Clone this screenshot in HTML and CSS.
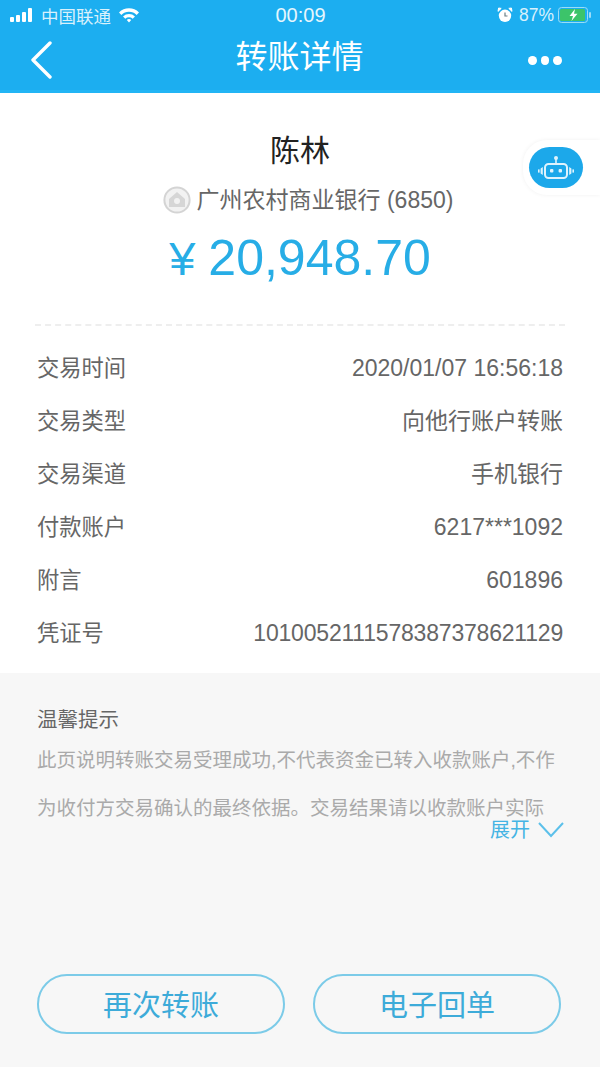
FILE: index.html
```html
<!DOCTYPE html>
<html lang="zh-CN">
<head>
  <meta charset="UTF-8">
  <title>转账详情</title>
  <meta name="viewport" content="width=device-width, initial-scale=1.0">
  <link rel="stylesheet" href="styles.css">
</head>
<body>
  <div class="page">

    <header class="top">
      <!-- Status bar -->
      <div class="status">
        <div class="status-left">
          <svg class="signal" width="24" height="14" viewBox="0 0 24 14">
            <rect x="0" y="9" width="4" height="5" rx="1"/>
            <rect x="6" y="7" width="4" height="7" rx="1"/>
            <rect x="12" y="4" width="4" height="10" rx="1"/>
            <rect x="18" y="0" width="4" height="14" rx="1"/>
          </svg>
          <span class="carrier">中国联通</span>
          <svg class="wifi" width="22" height="16" viewBox="0 0 22 16">
            <path d="M1 5.5 A14 14 0 0 1 21 5.5 L18.6 8 A10.6 10.6 0 0 0 3.4 8 Z"/>
            <path d="M5 9.4 A8.6 8.6 0 0 1 17 9.4 L14.7 11.7 A5.4 5.4 0 0 0 7.3 11.7 Z"/>
            <path d="M8.8 13 A3.2 3.2 0 0 1 13.2 13 L11 15.4 Z"/>
          </svg>
        </div>
        <span class="clock">00:09</span>
        <div class="status-right">
          <svg class="alarm" width="16" height="16" viewBox="0 0 16 16">
            <circle cx="8" cy="8.8" r="6.2" fill="#fff"/>
            <path d="M8 5.5 V9 H10.5" fill="none" stroke="#6b7f86" stroke-width="1.2"/>
            <path d="M1 4.4 L4.2 1.4 L1.6 1 Z M15 4.4 L11.8 1.4 L14.4 1 Z" fill="#fff" stroke="#fff"/>
          </svg>
          <span class="percent">87%</span>
          <svg class="battery" width="33" height="16" viewBox="0 0 33 16">
            <rect x="0.5" y="0.5" width="29" height="15" rx="3" fill="none" stroke="#9bdcf7"/>
            <rect x="2" y="2" width="25" height="12" rx="1.5" fill="#3cc46a"/>
            <rect x="31" y="5" width="2" height="6" rx="1" fill="#9bdcf7"/>
            <path d="M17 2 L11.5 9 H15 L13.5 14 L19.5 6.8 H16 Z" fill="#fff"/>
          </svg>
        </div>
      </div>

      <!-- Title bar -->
      <nav class="nav">
        <svg class="back" width="22" height="38" viewBox="0 0 22 38">
          <path d="M20 2 L3 19 L20 36" fill="none" stroke="#fff" stroke-width="3.4" stroke-linecap="round" stroke-linejoin="round"/>
        </svg>
        <h1 class="nav-title">转账详情</h1>
        <div class="more"><i></i><i></i><i></i></div>
      </nav>
    </header>

    <!-- Floating assistant -->
    <div class="robot-tab">
      <div class="robot">
        <svg width="36" height="26" viewBox="0 0 36 26">
          <circle cx="18" cy="3" r="2" fill="#dff3fd"/>
          <path d="M18 4 V9" stroke="#dff3fd" stroke-width="1.6"/>
          <rect x="7" y="9" width="22" height="14" rx="3.5" fill="none" stroke="#dff3fd" stroke-width="2"/>
          <rect x="12" y="14" width="3.4" height="3.4" rx="1" fill="#dff3fd"/>
          <rect x="20.6" y="14" width="3.4" height="3.4" rx="1" fill="#dff3fd"/>
          <path d="M4.8 12 V20 L2.6 18.4 V13.6 Z M31.2 12 V20 L33.4 18.4 V13.6 Z" fill="#dff3fd"/>
          <rect x="0" y="14.4" width="1.6" height="3.2" fill="#dff3fd"/>
          <rect x="34.4" y="14.4" width="1.6" height="3.2" fill="#dff3fd"/>
        </svg>
      </div>
    </div>

    <main class="detail">
      <section class="summary">
        <div class="payee">陈林</div>
        <div class="bank">
          <svg class="bank-icon" width="28" height="28" viewBox="0 0 28 28">
            <circle cx="14" cy="14" r="12.6" fill="#f2f2f2" stroke="#d4d4d4" stroke-width="2"/>
            <path d="M14 6 L22 13 V21 H6 V13 Z" fill="#d6d6d6"/>
            <circle cx="14" cy="15" r="3" fill="#f2f2f2"/>
          </svg>
          <span>广州农村商业银行 (6850)</span>
        </div>
        <div class="amount"><span class="yen">¥</span>20,948.70</div>
      </section>

      <dl class="rows">
        <div class="row"><dt>交易时间</dt><dd>2020/01/07 16:56:18</dd></div>
        <div class="row"><dt>交易类型</dt><dd>向他行账户转账</dd></div>
        <div class="row"><dt>交易渠道</dt><dd>手机银行</dd></div>
        <div class="row"><dt>付款账户</dt><dd>6217***1092</dd></div>
        <div class="row"><dt>附言</dt><dd>601896</dd></div>
        <div class="row"><dt>凭证号</dt><dd class="serial">1010052111578387378621129</dd></div>
      </dl>
    </main>

    <section class="tips">
      <h2 class="tips-title">温馨提示</h2>
      <p class="tips-text">此页说明转账交易受理成功,不代表资金已转入收款账户,不作</p>
      <p class="tips-text">为收付方交易确认的最终依据。交易结果请以收款账户实际</p>
      <div class="expand">
        <span>展开</span>
        <svg width="26" height="16" viewBox="0 0 26 16">
          <path d="M1 1 L13 14 L25 1" fill="none" stroke="#5cc0ea" stroke-width="2"/>
        </svg>
      </div>

      <div class="actions">
        <button class="action">再次转账</button>
        <button class="action">电子回单</button>
      </div>
    </section>

  </div>
</body>
</html>
```

FILE: styles.css
```css
* {
  box-sizing: border-box;
}

body {
  margin: 0;
  background: #fff;
  color: #555;
  font-family: "Liberation Sans", "Noto Sans CJK SC", sans-serif;
}

.page {
  position: relative;
  display: flex;
  flex-direction: column;
  height: 1067px;
  overflow: hidden;
}

/* Header */
.top {
  height: 93px;
  background: #1caef0;
  border-bottom: 3px solid #22b5f5;
  color: #fff;
}

.status {
  display: flex;
  align-items: center;
  justify-content: space-between;
  height: 30px;
  padding: 0 9px 0 10px;
}

.status-left,
.status-right {
  display: flex;
  align-items: center;
  width: 150px;
}

.status-right {
  justify-content: flex-end;
}

.signal {
  fill: #fff;
  margin-right: 7px;
}

.carrier {
  font-size: 17.5px;
  color: #d9f1fc;
}

.wifi {
  fill: #fff;
  margin-left: 7px;
}

.clock {
  font-size: 20px;
  color: #e6f6fd;
}

.percent {
  font-size: 17.5px;
  margin: 0 4px 0 6px;
  color: #d9f1fc;
}

.nav {
  display: flex;
  align-items: center;
  justify-content: space-between;
  height: 60px;
  padding: 0 38px 0 30px;
}

.back {
  display: block;
}

.nav-title {
  margin: 0 0 0 19px;
  padding-bottom: 6px;
  font-size: 32px;
  line-height: 40px;
  font-weight: 400;
}

.more {
  display: flex;
  gap: 4px;
  width: 34px;
}

.more i {
  width: 9px;
  height: 9px;
  border-radius: 50%;
  background: #fff;
}

/* Floating assistant tab */
.robot-tab {
  position: absolute;
  top: 140px;
  right: 0;
  width: 77px;
  height: 55px;
  padding: 7px 0 0 6px;
  background: #fff;
  border-radius: 24px 0 0 24px;
  box-shadow: 0 0 4px rgba(0,0,0,0.06);
}

.robot {
  display: flex;
  align-items: center;
  justify-content: center;
  width: 54px;
  height: 41px;
  border-radius: 21px;
  background: #1ca8ea;
}

/* Transfer summary */
.summary {
  display: flex;
  flex-direction: column;
  align-items: center;
  height: 233px;
  margin: 0 35px;
  padding-top: 36px;
  border-bottom: 2px dashed #eeeeee;
}

.payee {
  font-size: 30px;
  line-height: 44px;
  color: #222;
}

.bank {
  display: flex;
  align-items: center;
  gap: 6px;
  margin: 12px 0 0 16px;
  font-size: 23px;
  line-height: 30px;
  color: #666;
}

.amount {
  margin-top: 13px;
  font-size: 50px;
  line-height: 60px;
  color: #27ade6;
}

.yen {
  font-size: 47px;
  margin-right: 13px;
}

/* Detail rows */
.rows {
  margin: 16px 37px 0;
}

.row {
  display: flex;
  align-items: center;
  justify-content: space-between;
  height: 53px;
}

.row dt {
  font-size: 22.25px;
  line-height: 30px;
  color: #666;
}

.row dd {
  margin: 0;
  padding-bottom: 1px;
  font-size: 23px;
  line-height: 30px;
  color: #666;
}

.row .serial {
  letter-spacing: -0.2px;
}

/* Tips and bottom buttons */
.tips {
  flex: 1;
  display: flex;
  flex-direction: column;
  margin-top: 13px;
  padding: 32px 37px 33px;
  background: #f7f7f7;
}

.tips-title {
  margin: 0 0 1px;
  font-size: 20.5px;
  line-height: 30px;
  font-weight: 400;
  color: #666;
}

.tips-text {
  margin: 0;
  font-size: 19.5px;
  line-height: 48px;
  white-space: nowrap;
  color: #aaa;
}

.expand {
  display: flex;
  align-items: center;
  justify-content: flex-end;
  gap: 8px;
  margin: -15px -1px 0 0;
  font-size: 20px;
  line-height: 26px;
  color: #45b4e4;
}

.actions {
  display: flex;
  justify-content: space-between;
  margin-top: auto;
  padding-right: 2px;
}

.action {
  width: 248px;
  height: 60px;
  padding: 0 0 2px;
  background: transparent;
  border: 2px solid #7ccbe8;
  border-radius: 30px;
  font-family: inherit;
  font-size: 29px;
  color: #3dabd9;
}
```
